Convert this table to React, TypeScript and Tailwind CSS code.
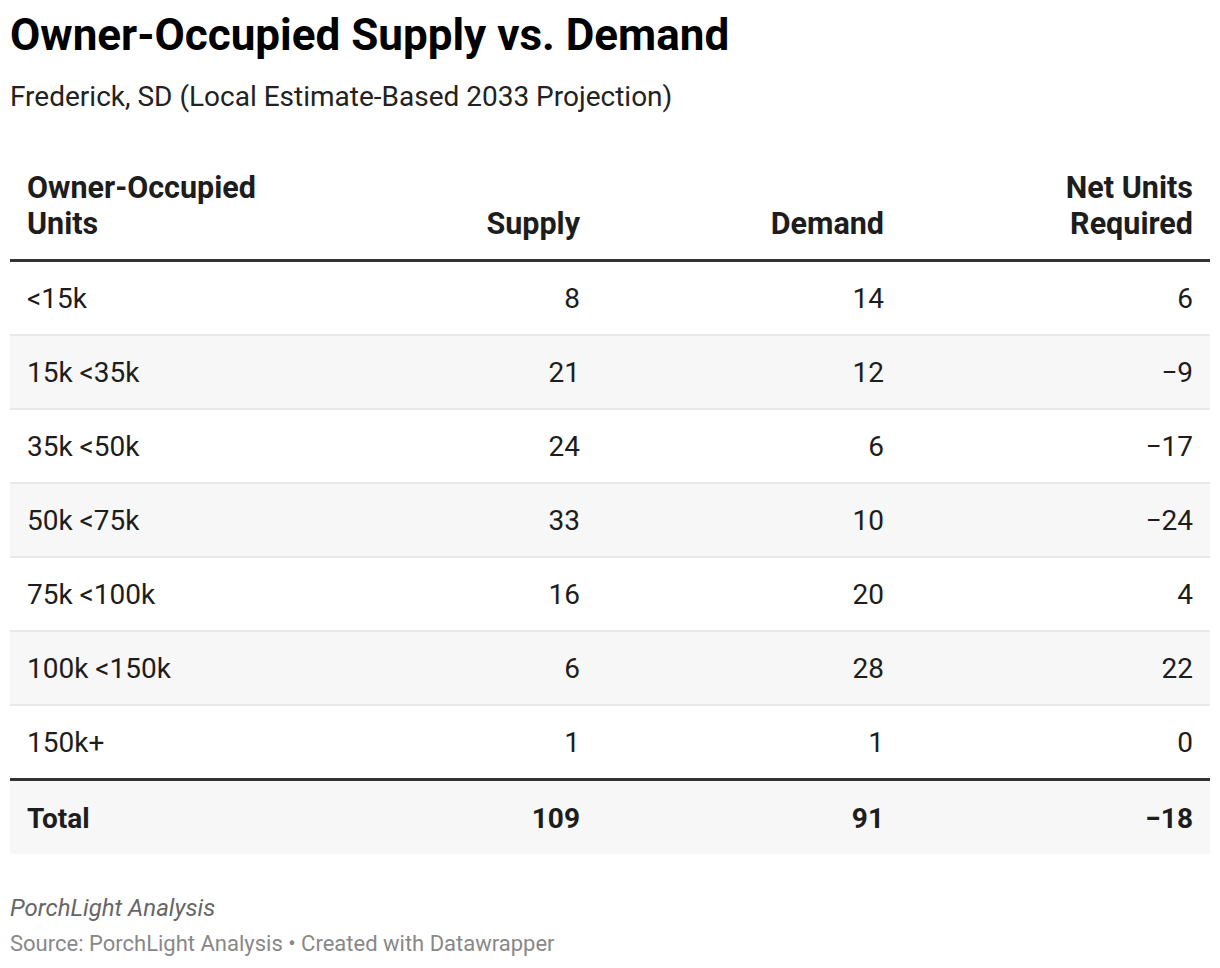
import React from 'react';

const rows: [string, number, number, string][] = [
  ['<15k', 8, 14, '6'],
  ['15k <35k', 21, 12, '−9'],
  ['35k <50k', 24, 6, '−17'],
  ['50k <75k', 33, 10, '−24'],
  ['75k <100k', 16, 20, '4'],
  ['100k <150k', 6, 28, '22'],
  ['150k+', 1, 1, '0'],
];

export default function App() {
  return (
    <div className="bg-white px-[10px] pt-[9px] text-[#1d1d1d]" style={{ fontFamily: 'Roboto, sans-serif' }}>
      <h1 className="text-[44px] font-bold leading-[52px] text-black">Owner-Occupied Supply vs. Demand</h1>
      <p className="mt-[18px] text-[28px] leading-[36px] text-[#222]">Frederick, SD (Local Estimate-Based 2033 Projection)</p>

      <table className="mt-[55px] w-[1200px] border-collapse">
        <thead>
          <tr className="border-b-[3px] border-[#333]">
            <th className="w-[286px] px-[17px] pb-[17px] text-left align-bottom text-[30.5px] font-bold leading-[36px]">
              Owner-Occupied
              <br />
              Units
            </th>
            <th className="w-[300px] px-[16px] pb-[17px] text-right align-bottom text-[30.5px] font-bold leading-[36px]">Supply</th>
            <th className="w-[304px] px-[16px] pb-[17px] text-right align-bottom text-[30.5px] font-bold leading-[36px]">Demand</th>
            <th className="w-[310px] px-[17px] pb-[17px] text-right align-bottom text-[30.5px] font-bold leading-[36px]">
              Net Units
              <br />
              Required
            </th>
          </tr>
        </thead>
        <tbody>
          {rows.map((r, i) => {
            const last = i === rows.length - 1;
            return (
              <tr
                key={r[0]}
                className={`text-[28px] ${i % 2 === 1 ? 'bg-[#f7f7f7]' : 'bg-white'} ${last ? 'h-[75px] border-b-[3px] border-[#333]' : 'h-[74px] border-b-2 border-[#e8e8e8]'}`}
              >
                <td className="px-[17px] pt-[2px] text-left">{r[0]}</td>
                <td className="px-[16px] pt-[2px] text-right">{r[1]}</td>
                <td className="px-[16px] pt-[2px] text-right">{r[2]}</td>
                <td className="px-[17px] pt-[2px] text-right">{r[3]}</td>
              </tr>
            );
          })}
          <tr className="h-[74px] bg-[#f7f7f7] text-[28px] font-bold">
            <td className="px-[17px] pt-[3px] text-left">Total</td>
            <td className="px-[16px] pt-[3px] text-right">109</td>
            <td className="px-[16px] pt-[3px] text-right">91</td>
            <td className="px-[17px] pt-[3px] text-right">−18</td>
          </tr>
        </tbody>
      </table>

      <p className="mt-[39px] text-[24px] italic leading-[30px] text-[#666]">PorchLight Analysis</p>
      <p className="mt-[7px] text-[22px] leading-[28px] text-[#888]">Source: PorchLight Analysis • Created with Datawrapper</p>
    </div>
  );
}
